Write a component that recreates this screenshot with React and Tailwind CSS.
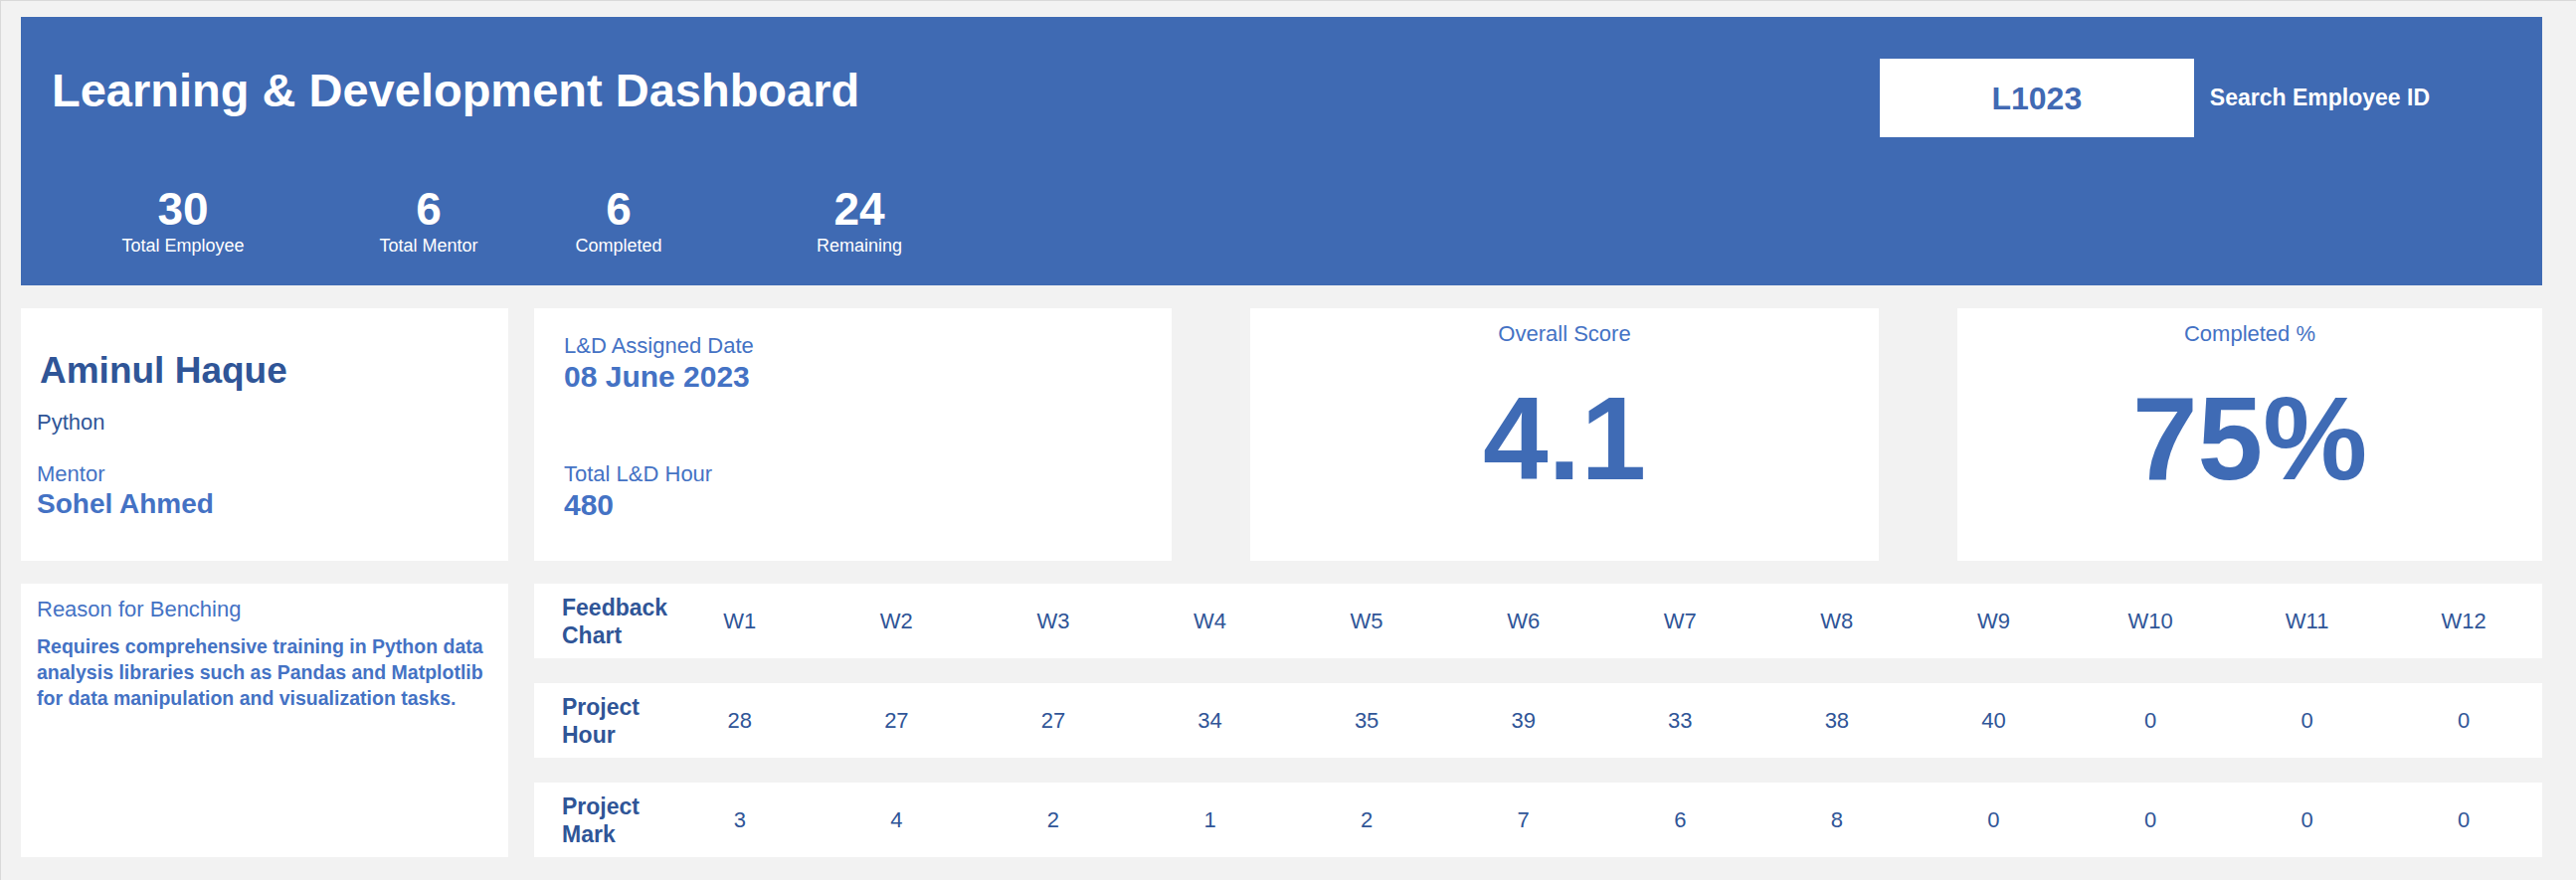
import React from 'react';

const stats = [
  { value: '30', label: 'Total Employee', ml: 'ml-[83px]' },
  { value: '6', label: 'Total Mentor', ml: 'ml-[87px]' },
  { value: '6', label: 'Completed', ml: 'ml-[31px]' },
  { value: '24', label: 'Remaining', ml: 'ml-[82px]' },
];

const weeks = ['W1', 'W2', 'W3', 'W4', 'W5', 'W6', 'W7', 'W8', 'W9', 'W10', 'W11', 'W12'];
const hours = [28, 27, 27, 34, 35, 39, 33, 38, 40, 0, 0, 0];
const marks = [3, 4, 2, 1, 2, 7, 6, 8, 0, 0, 0, 0];

const font = { fontFamily: '"Liberation Sans", Arial, sans-serif' };

const TableRow = ({ title, sub, cells }) => (
  <div className="grid grid-cols-[128px_repeat(12,1fr)] items-center h-[75px] bg-white">
    <div className="pl-[28px] text-[23px] leading-[28px] font-bold text-[#2f5597]">
      <div>{title}</div>
      <div>{sub}</div>
    </div>
    {cells.map((c, i) => (
      <div key={i} className="text-center text-[22px] leading-none text-[#2f5597]">
        {c}
      </div>
    ))}
  </div>
);

const App = () => {
  return (
    <div
      style={font}
      className="w-[2590px] h-[885px] bg-[#f2f2f2] border-t border-l border-[#d9d9d9] pl-[20px] pt-[16px] pr-[34px] overflow-hidden"
    >
      {/* header */}
      <div className="h-[270px] bg-[#3f6ab3] flex flex-col pt-[42px]">
        <div className="flex items-start h-[79px]">
          <h1 className="ml-[31px] mt-[8px] text-[47px] leading-none font-bold text-white">
            Learning &amp; Development Dashboard
          </h1>
          <div className="ml-auto mr-[113px] flex items-center">
            <div className="w-[316px] h-[79px] bg-white flex items-center justify-center text-[32px] leading-none font-bold text-[#4169b3]">
              L1023
            </div>
            <span className="ml-[16px] text-[23px] leading-none font-bold text-white">Search Employee ID</span>
          </div>
        </div>
        <div className="flex mt-[49px]">
          {stats.map((s, i) => (
            <div key={i} className={`${s.ml} w-[160px] flex flex-col items-center text-white`}>
              <div className="text-[46px] leading-none font-bold">{s.value}</div>
              <div className="mt-[5px] text-[18px] leading-none">{s.label}</div>
            </div>
          ))}
        </div>
      </div>

      {/* cards */}
      <div className="flex mt-[23px] h-[254px]">
        <div className="w-[490px] bg-white pl-[16px] pt-[44px] flex flex-col">
          <div className="pl-[3px] text-[37px] leading-none font-bold text-[#2f5597]">Aminul Haque</div>
          <div className="mt-[23px] text-[22px] leading-none text-[#2f5597]">Python</div>
          <div className="mt-[30px] text-[22px] leading-none text-[#4472c4]">Mentor</div>
          <div className="mt-[5px] text-[28px] leading-none font-bold text-[#4472c4]">Sohel Ahmed</div>
        </div>
        <div className="ml-[26px] w-[641px] bg-white pl-[30px] pt-[27px] flex flex-col">
          <div className="text-[22px] leading-none text-[#4472c4]">L&amp;D Assigned Date</div>
          <div className="mt-[5px] text-[30px] leading-none font-bold text-[#4472c4]">08 June 2023</div>
          <div className="mt-[72px] text-[22px] leading-none text-[#4472c4]">Total L&amp;D Hour</div>
          <div className="mt-[5px] text-[30px] leading-none font-bold text-[#4472c4]">480</div>
        </div>
        <div className="ml-[79px] w-[632px] bg-white pt-[15px] flex flex-col items-center">
          <div className="text-[22px] leading-none text-[#4472c4]">Overall Score</div>
          <div className="mt-[35px] text-[118px] leading-none font-bold text-[#3f6bb5]">4.1</div>
        </div>
        <div className="ml-[79px] flex-1 bg-white pt-[15px] flex flex-col items-center">
          <div className="text-[22px] leading-none text-[#4472c4]">Completed %</div>
          <div className="mt-[35px] text-[118px] leading-none font-bold text-[#3f6bb5]">75%</div>
        </div>
      </div>

      {/* bottom */}
      <div className="flex mt-[23px] h-[275px]">
        <div className="w-[490px] bg-white pl-[16px] pt-[15px]">
          <div className="text-[22px] leading-none text-[#4472c4]">Reason for Benching</div>
          <p className="mt-[13px] w-[465px] text-[19.5px] leading-[26px] font-bold text-[#4472c4]">
            Requires comprehensive training in Python data analysis libraries such as Pandas and Matplotlib for data manipulation and visualization tasks.
          </p>
        </div>
        <div className="ml-[26px] flex-1 flex flex-col gap-[25px]">
          <TableRow title="Feedback" sub="Chart" cells={weeks} />
          <TableRow title="Project" sub="Hour" cells={hours} />
          <TableRow title="Project" sub="Mark" cells={marks} />
        </div>
      </div>
    </div>
  );
};

export default App;
